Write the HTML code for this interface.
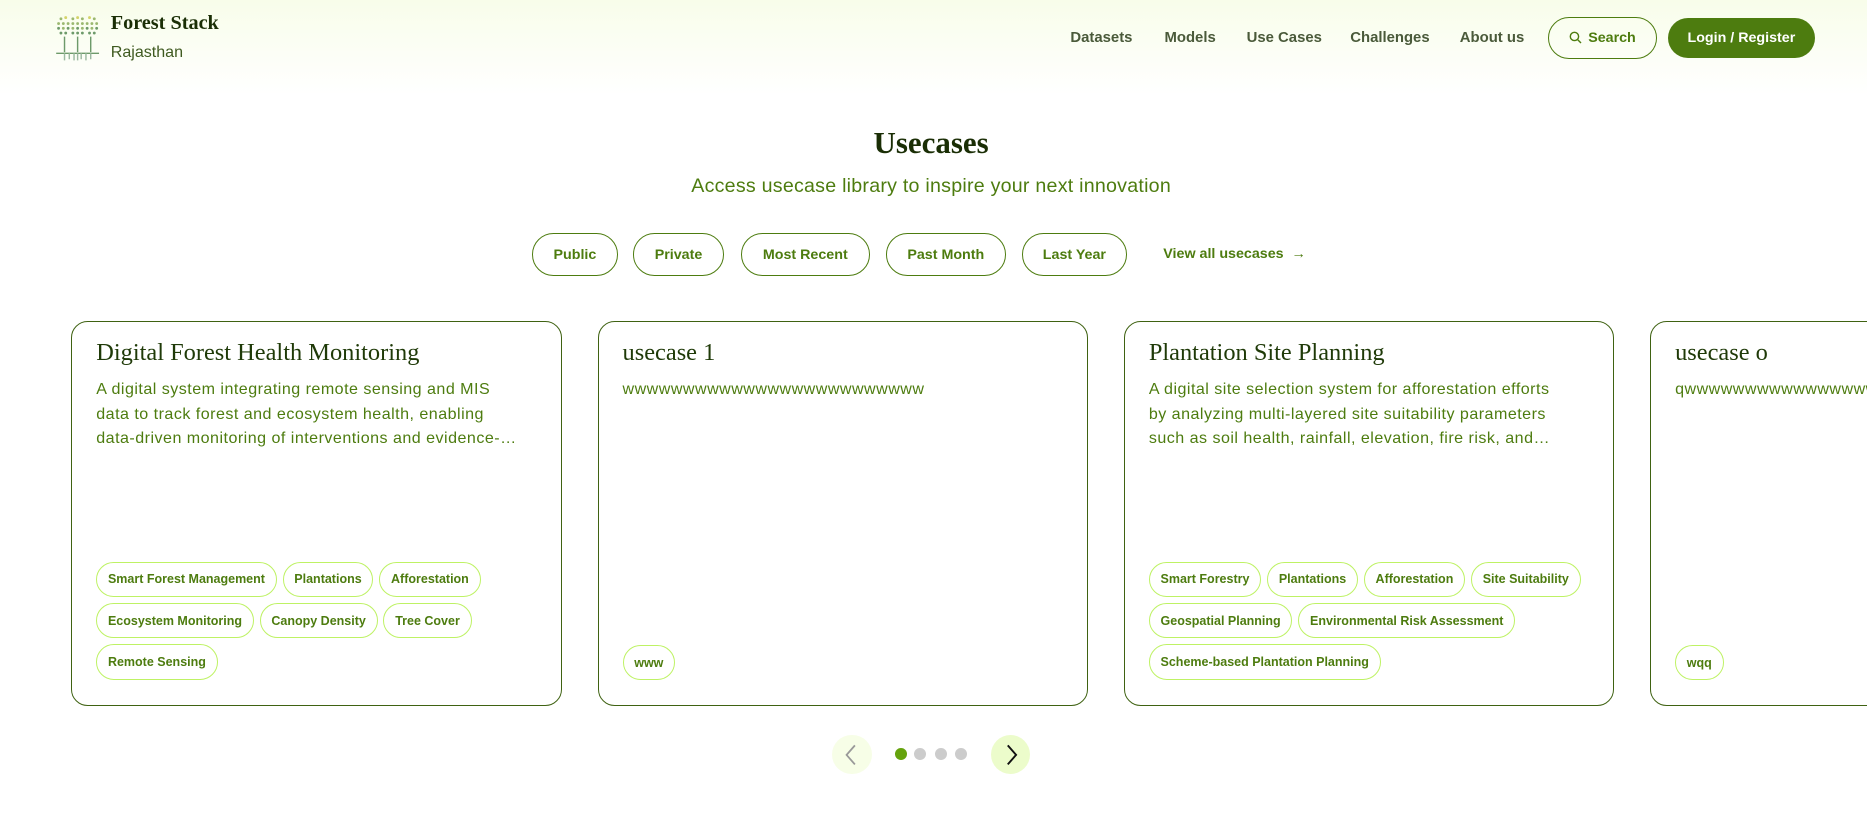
<!DOCTYPE html>
<html><head><meta charset="utf-8"><style>
html,body{margin:0;padding:0;}
html{width:1867px;height:838px;overflow:hidden;background:#fff;}
body{zoom:1.19069;width:1568px;height:704px;position:relative;font-family:"Liberation Sans",sans-serif;overflow:hidden;}
.hdr{position:absolute;left:0;top:0;width:1568px;height:80px;background:linear-gradient(#f8fdea,#fff);}
.abs{position:absolute;white-space:nowrap;}
.nav{font-size:12.5px;color:#4a5a3a;font-weight:bold;top:25px;}
.pill{position:absolute;top:196px;height:34px;border:1.3px solid #4d7c0f;border-radius:18px;color:#4d7c0f;font-size:12px;font-weight:bold;display:flex;align-items:center;justify-content:center;}
.card{position:absolute;top:270px;width:410px;height:321px;border:1.3px solid #3f6212;border-radius:14px;overflow:hidden;}
.card h3{position:absolute;left:20px;top:14px;margin:0;font-family:"Liberation Serif",serif;font-weight:normal;font-size:20.5px;color:#1f3a08;white-space:nowrap;}
.card p{position:absolute;left:20px;top:46px;margin:0;font-size:13.5px;line-height:20.5px;color:#4d7c0f;white-space:nowrap;letter-spacing:0.4px;}
.tags{position:absolute;left:20px;top:201px;width:380px;display:flex;flex-wrap:wrap;gap:5px 5px;}
.tags.b{top:271px;}
.tag{height:28px;padding:0 9px;border:1.3px solid #bef264;border-radius:15px;font-size:10.5px;font-weight:bold;color:#4d7c0f;display:flex;align-items:center;white-space:nowrap;}
.dot{position:absolute;top:628px;width:10px;height:10px;border-radius:50%;background:#ccc;}
</style></head><body>
<div class="hdr"></div>
<svg class="abs" style="left:46px;top:12px" width="38" height="40" viewBox="0 0 38 40">
<g fill="#9bb870">
<circle cx="5" cy="4" r="1.2"/><circle cx="9" cy="3" r="1.2" fill="#d4d36a"/><circle cx="15" cy="4" r="1.2"/><circle cx="19" cy="3" r="1.2" fill="#d4d36a"/><circle cx="23" cy="4" r="1.2"/><circle cx="29" cy="3" r="1.2" fill="#d4d36a"/><circle cx="33" cy="4" r="1.2"/>
<circle cx="3" cy="8" r="1.2"/><circle cx="7" cy="8" r="1.2"/><circle cx="11" cy="8" r="1.2"/><circle cx="15" cy="8" r="1.2"/><circle cx="19" cy="8" r="1.2"/><circle cx="23" cy="8" r="1.2"/><circle cx="27" cy="8" r="1.2"/><circle cx="31" cy="8" r="1.2"/><circle cx="35" cy="8" r="1.2"/>
<circle cx="3" cy="12" r="1.2" fill="#6d9a6a"/><circle cx="7" cy="12" r="1.2"/><circle cx="11" cy="12" r="1.2" fill="#6d9a6a"/><circle cx="15" cy="12" r="1.2"/><circle cx="19" cy="12" r="1.2" fill="#6d9a6a"/><circle cx="23" cy="12" r="1.2"/><circle cx="27" cy="12" r="1.2" fill="#6d9a6a"/><circle cx="31" cy="12" r="1.2"/><circle cx="35" cy="12" r="1.2" fill="#6d9a6a"/>
<circle cx="5" cy="16" r="1.2" fill="#6d9a6a"/><circle cx="9" cy="16" r="1.2" fill="#6d9a6a"/><circle cx="15" cy="16" r="1.2" fill="#6d9a6a"/><circle cx="19" cy="16" r="1.2" fill="#6d9a6a"/><circle cx="23" cy="16" r="1.2" fill="#6d9a6a"/><circle cx="29" cy="16" r="1.2" fill="#6d9a6a"/><circle cx="33" cy="16" r="1.2" fill="#6d9a6a"/>
</g>
<g stroke="#6d9a6a" stroke-width="1.2"><path d="M8 19V32M19 19V32M30 19V32M1 33H37"/><path d="M8 33v6M12 33v5M16 33v6M19 33v6M22 33v5M26 33v6M30 33v5" stroke="#9bb8a0"/></g>
</svg>
<div class="abs" style="left:93px;top:10px;font-family:'Liberation Serif',serif;font-weight:bold;font-size:17px;color:#1a2e05">Forest Stack</div>
<div class="abs" style="left:93px;top:36px;font-size:13.5px;color:#3f5a20">Rajasthan</div>
<div class="abs nav" style="left:899px">Datasets</div>
<div class="abs nav" style="left:978px">Models</div>
<div class="abs nav" style="left:1047px">Use Cases</div>
<div class="abs nav" style="left:1134px">Challenges</div>
<div class="abs nav" style="left:1226px">About us</div>
<div class="abs" style="left:1300px;top:14px;width:90px;height:34px;border:1.3px solid #4d7c0f;border-radius:18px;display:flex;align-items:center;justify-content:center;color:#4d7c0f;font-size:12px;font-weight:bold"><svg width="11" height="11" viewBox="0 0 12 12" style="margin-right:5px"><circle cx="5" cy="5" r="3.8" fill="none" stroke="#4d7c0f" stroke-width="1.3"/><path d="M8 8l3 3" stroke="#4d7c0f" stroke-width="1.3"/></svg>Search</div>
<div class="abs" style="left:1401px;top:15px;width:123px;height:34px;background:#4d7c0f;border-radius:18px;display:flex;align-items:center;justify-content:center;color:#fff;font-size:12px;font-weight:bold">Login / Register</div>

<div class="abs" style="left:0;width:1564px;text-align:center;top:105px;font-family:'Liberation Serif',serif;font-weight:bold;font-size:26px;color:#1a2e05">Usecases</div>
<div class="abs" style="left:0;width:1564px;text-align:center;top:147px;font-size:16.5px;color:#4d7c0f;letter-spacing:0.2px">Access usecase library to inspire your next innovation</div>

<div class="pill" style="left:447px;width:70px">Public</div>
<div class="pill" style="left:532px;width:74px">Private</div>
<div class="pill" style="left:622px;width:107px">Most Recent</div>
<div class="pill" style="left:744px;width:99px">Past Month</div>
<div class="pill" style="left:858px;width:87px">Last Year</div>
<div class="abs" style="left:977px;top:207px;font-size:12px;font-weight:bold;color:#4d7c0f">View all usecases &nbsp;→</div>

<div class="card" style="left:60px">
<h3>Digital Forest Health Monitoring</h3>
<p>A digital system integrating remote sensing and MIS<br>data to track forest and ecosystem health, enabling<br>data-driven monitoring of interventions and evidence-…</p>
<div class="tags"><span class="tag">Smart Forest Management</span><span class="tag">Plantations</span><span class="tag">Afforestation</span><span class="tag">Ecosystem Monitoring</span><span class="tag">Canopy Density</span><span class="tag">Tree Cover</span><span class="tag">Remote Sensing</span></div>
</div>
<div class="card" style="left:502px">
<h3>usecase 1</h3>
<p>wwwwwwwwwwwwwwwwwwwwwwwww</p>
<div class="tags b"><span class="tag">www</span></div>
</div>
<div class="card" style="left:944px">
<h3>Plantation Site Planning</h3>
<p>A digital site selection system for afforestation efforts<br>by analyzing multi-layered site suitability parameters<br>such as soil health, rainfall, elevation, fire risk, and…</p>
<div class="tags"><span class="tag">Smart Forestry</span><span class="tag">Plantations</span><span class="tag">Afforestation</span><span class="tag">Site Suitability</span><span class="tag">Geospatial Planning</span><span class="tag">Environmental Risk Assessment</span><span class="tag">Scheme-based Plantation Planning</span></div>
</div>
<div class="card" style="left:1386px">
<h3>usecase o</h3>
<p>qwwwwwwwwwwwwwwwwwwwwww</p>
<div class="tags b"><span class="tag">wqq</span></div>
</div>

<div class="abs" style="left:699px;top:617px;width:33px;height:33px;border-radius:50%;background:#f7fee7"></div>
<svg class="abs" style="left:708px;top:624px" width="14" height="20" viewBox="0 0 14 20"><path d="M10 2L3 10l7 8" fill="none" stroke="#999" stroke-width="1.5"/></svg>
<div class="dot" style="left:752px;background:#65a30d"></div>
<div class="dot" style="left:768px"></div>
<div class="dot" style="left:785px"></div>
<div class="dot" style="left:802px"></div>
<div class="abs" style="left:832px;top:617px;width:33px;height:33px;border-radius:50%;background:#ecfccb"></div>
<svg class="abs" style="left:842px;top:624px" width="14" height="20" viewBox="0 0 14 20"><path d="M4 2l7 8-7 8" fill="none" stroke="#111" stroke-width="1.6"/></svg>
</body></html>
